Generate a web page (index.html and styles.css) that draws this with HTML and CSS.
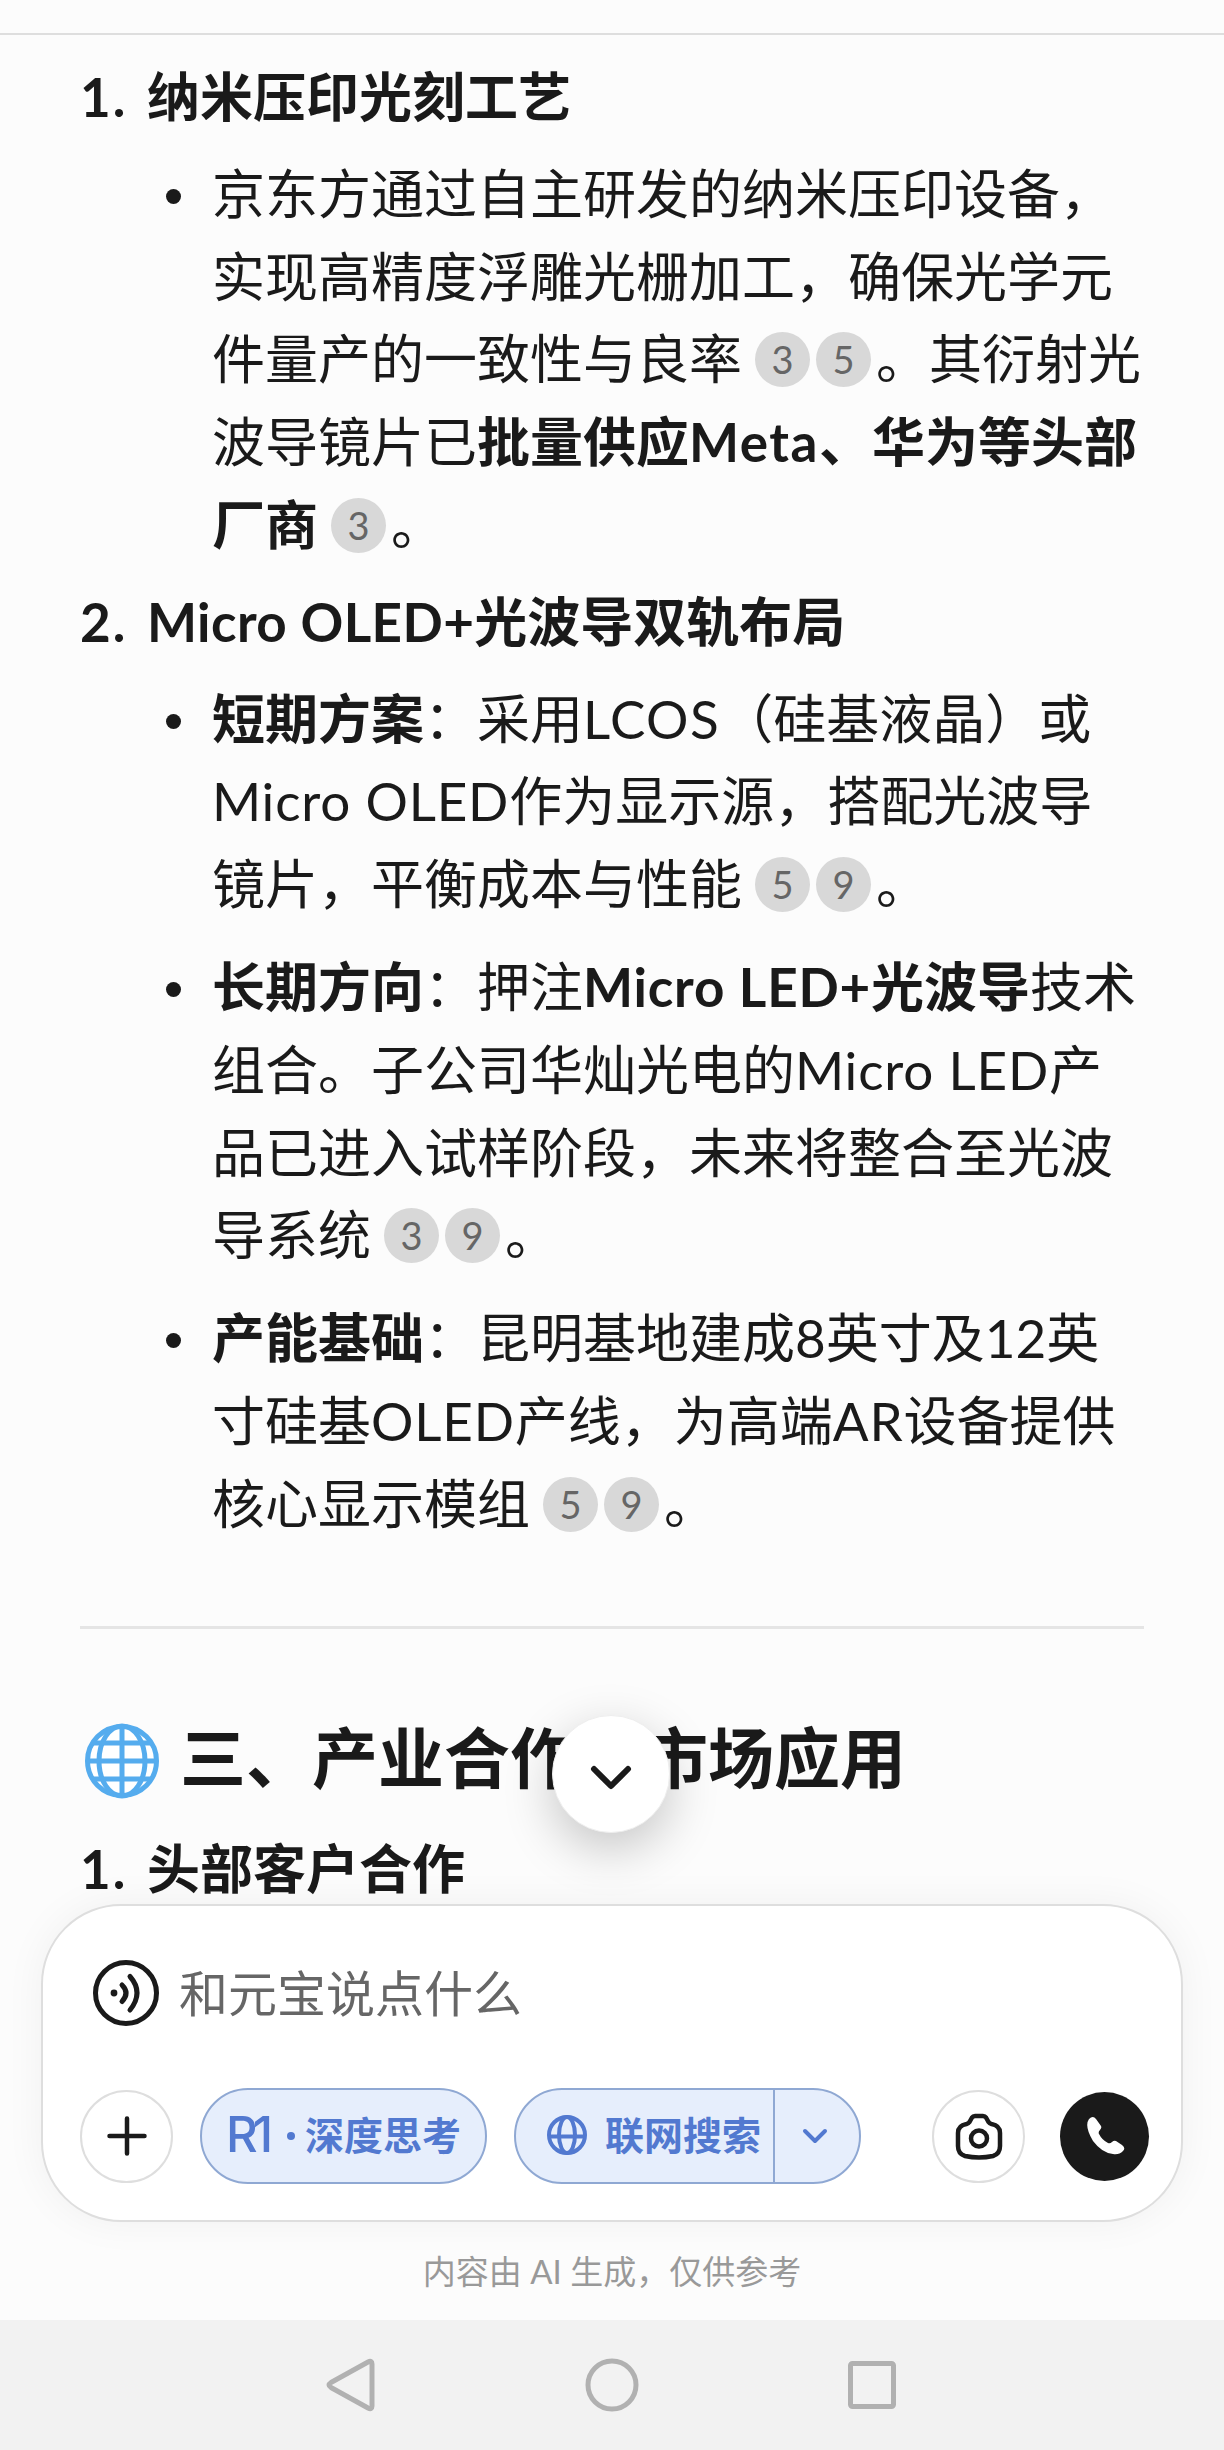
FILE: index.html
```
<!DOCTYPE html>
<html lang="zh-CN">
<head>
    <meta charset="UTF-8">
    <meta name="viewport" content="width=device-width, initial-scale=1.0">
    <title>元宝</title>
    <link rel="stylesheet" href="styles.css">
</head>
<body>
    <div class="topbar"></div>

    <main class="chat">
        <div class="item-title"><span class="num">1.</span>纳米压印光刻工艺</div>
        <ul>
            <li>京东方通过自主研发的纳米压印设备，<br>实现高精度浮雕光栅加工，确保光学元<br>件量产的一致性与良率<span class="refs"><span class="ref">3</span><span class="ref">5</span></span>。其衍射光<br>波导镜片已<b>批量供应<span class="en wide">Meta</span>、华为等头部<br>厂商</b><span class="refs"><span class="ref">3</span></span>。</li>
        </ul>
        <div class="item-title"><span class="num">2.</span><span class="en tight">Micro OLED+</span>光波导双轨布局</div>
        <ul>
            <li><b>短期方案</b>：采用<span class="en wide">LCOS</span>（硅基液晶）或<br><span class="en">Micro OLED</span>作为显示源，搭配光波导<br>镜片，平衡成本与性能<span class="refs"><span class="ref">5</span><span class="ref">9</span></span>。</li>
            <li><b>长期方向</b>：押注<b><span class="en">Micro LED+</span>光波导</b>技术<br>组合。子公司华灿光电的<span class="en">Micro LED</span>产<br>品已进入试样阶段，未来将整合至光波<br>导系统<span class="refs"><span class="ref">3</span><span class="ref">9</span></span>。</li>
            <li><b>产能基础</b>：昆明基地建成8英寸及12英<br>寸硅基<span class="en">OLED</span>产线，为高端<span class="en">AR</span>设备提供<br>核心显示模组<span class="refs"><span class="ref">5</span><span class="ref">9</span></span>。</li>
        </ul>
        <hr>
        <h2>
            <svg class="globe-emoji" viewBox="0 0 76 76" fill="none" stroke="#55acee" stroke-width="5">
                <circle cx="38" cy="38" r="34.500" fill="#fff"/>
                <ellipse cx="38" cy="38" rx="23" ry="35"/>
                <path d="M38 3v70M3 38h70M8 20h60M8 56h60"/>
            </svg>
            三、产业合作与市场应用
        </h2>
        <div class="item-title"><span class="num">1.</span>头部客户合作</div>
        <button class="scroll-down">
            <svg width="44" height="30" viewBox="0 0 44 30" fill="none" stroke="#1a1a1a" stroke-width="6" stroke-linecap="round" stroke-linejoin="round"><path d="M5 6l17 17L39 6"/></svg>
        </button>
    </main>

    <section class="composer">
        <div class="input-row">
            <svg width="66" height="66" viewBox="0 0 66 66" fill="none" stroke="#1a1a1a" stroke-width="5" stroke-linecap="round">
                <circle cx="33" cy="33" r="30.500"/>
                <circle cx="21" cy="33" r="3.400" fill="#1a1a1a" stroke="none"/>
                <path d="M29 25q8 8 0 16.500M37 16.500q14 16 0 33.500"/>
            </svg>
            <span class="placeholder">和元宝说点什么</span>
        </div>
        <div class="tools">
            <button class="round">
                <svg width="40" height="40" viewBox="0 0 40 40" stroke="#1a1a1a" stroke-width="4.500" stroke-linecap="round"><path d="M20 2.500v35M2.500 20h35"/></svg>
            </button>
            <button class="pill think"><span class="r1">R1</span><span class="dot"></span>深度思考</button>
            <div class="pill search">
                <div class="search-main">
                    <svg width="40" height="40" viewBox="0 0 40 40" fill="none" stroke="#5279d0" stroke-width="4">
                        <circle cx="20" cy="20" r="18"/>
                        <ellipse cx="20" cy="20" rx="8" ry="18"/>
                        <path d="M2 21.500h36"/>
                    </svg>
                    联网搜索
                </div>
                <div class="search-more">
                    <svg width="26" height="18" viewBox="0 0 26 18" fill="none" stroke="#5279d0" stroke-width="4" stroke-linecap="round" stroke-linejoin="round"><path d="M3 4l10 10L23 4"/></svg>
                </div>
            </div>
            <button class="round camera">
                <svg width="50" height="50" viewBox="0 0 50 50" fill="none" stroke="#1a1a1a" stroke-width="4.500" stroke-linejoin="round">
                    <path d="M18 6.500Q19 5 21 5h8q2 0 3 1.500l2.500 4.500q1 1.500 3 2 8.500 1.500 8.500 9V35q0 8-7 10-7 1.500-14 1.500T11 45Q4 43 4 35V22q0-7.500 8.500-9 2-.5 3-2z"/>
                    <circle cx="25" cy="27.500" r="8"/>
                </svg>
            </button>
            <button class="call">
                <svg width="40" height="40" viewBox="0 0 40 40" fill="#fff"><path d="M4 3Q8-1 11 3l5 7q1 2-1 4t-1 4q3 6 9 9 2 1 4-1t4-1l6 4q4 3 1 6-4 4-10 3Q17 37 8 25-1 10 4 3z"/></svg>
            </button>
        </div>
    </section>
    <p class="notice">内容由 AI 生成，仅供参考</p>

    <nav class="navbar">
        <svg width="54" height="54" viewBox="0 0 54 54"><path d="M6 24.500L43 4q4-2 4 2v42q0 4-4 2L6 29.500q-4-2.500 0-5z"/></svg>
        <svg width="54" height="54" viewBox="0 0 54 54"><circle cx="27" cy="27" r="24"/></svg>
        <svg width="54" height="54" viewBox="0 0 54 54"><rect x="5.500" y="5.500" width="43" height="43" rx="2"/></svg>
    </nav>
</body>
</html>
```

FILE: styles.css
```
* {
    box-sizing: border-box;
}
body {
    margin: 0;
    height: 2450px;
    display: flex;
    flex-direction: column;
    background-color: #fcfcfc;
    color: #1a1a1a;
    font-family: Lato, "Noto Sans CJK SC", sans-serif;
    overflow: hidden;
}
button {
    padding: 0;
    font: inherit;
}
svg {
    flex: none;
    display: block;
}
.topbar {
    height: 35px;
    border-bottom: 2px solid #dedede;
}

/* conversa */
.chat {
    position: relative;
    height: 1870px;
    padding: 21px 80px 0;
    font-size: 53px;
    line-height: 82.800px;
    white-space: nowrap;
}
.item-title {
    display: flex;
    font-weight: 700;
}
.num {
    width: 67px;
    letter-spacing: 2px;
}
.en {
    letter-spacing: 0.8px;
}
.en.wide {
    letter-spacing: 1.500px;
}
.en.tight {
    letter-spacing: 0.4px;
}
ul {
    list-style: none;
    margin: 14px 0;
    padding: 0 0 0 132px;
    display: flex;
    flex-direction: column;
    gap: 20px;
}
li::before {
    content: "";
    float: left;
    width: 15px;
    height: 15px;
    margin: 36px 0 0 -46px;
    border-radius: 50%;
    background-color: #1a1a1a;
}
.refs {
    display: inline-flex;
    gap: 6px;
    margin: 0 5px 12px 13px;
    vertical-align: middle;
    line-height: 54px;
}
.ref {
    width: 55px;
    height: 55px;
    border-radius: 50%;
    background-color: #d8d8d8;
    color: #666;
    font-size: 38px;
    text-align: center;
}
hr {
    height: 3px;
    margin: 80px 0 0;
    border: none;
    background-color: #e5e5e5;
}
h2 {
    display: flex;
    align-items: center;
    gap: 20px;
    margin: 79px 0 20px;
    font-size: 66px;
    line-height: 100px;
}
.globe-emoji {
    width: 76px;
    height: 76px;
    margin: 7px 0 0 4px;
}
.scroll-down {
    position: absolute;
    left: 552px;
    top: 1680px;
    width: 118px;
    height: 118px;
    display: flex;
    align-items: center;
    justify-content: center;
    padding-top: 8px;
    border: 1px solid #eee;
    border-radius: 50%;
    background-color: #fff;
    box-shadow: 0 16px 50px rgba(0, 0, 0, 0.22);
}

/* caixa de mensagem */
.composer {
    position: relative;
    height: 318px;
    margin: -1px 41px 0;
    padding: 54px 32px 0 37px;
    border: 2px solid #dedede;
    border-radius: 80px;
    background-color: #fff;
    box-shadow: 0 0 40px rgba(0, 0, 0, 0.05);
}
.input-row {
    display: flex;
    align-items: center;
    gap: 20px;
    height: 66px;
    padding-left: 13px;
}
.placeholder {
    color: #666;
    font-size: 49px;
    line-height: 66px;
}
.tools {
    display: flex;
    align-items: center;
    height: 96px;
    margin-top: 62px;
}
.round, .call {
    display: flex;
    align-items: center;
    justify-content: center;
    width: 93px;
    height: 93px;
    border: 2px solid #dedede;
    border-radius: 50%;
    background-color: #fff;
}
.pill {
    display: flex;
    align-items: center;
    height: 96px;
    border: 2px solid #8fa8d3;
    border-radius: 48px;
    background-color: #e6eefc;
    color: #5279d0;
    font-size: 39px;
    font-weight: 700;
    line-height: 56px;
    white-space: nowrap;
}
.think {
    width: 287px;
    margin: 0 27px;
    padding: 0 0 3px 24px;
}
.r1 {
    width: 61px;
    font-family: Inter, sans-serif;
    font-size: 49px;
    font-weight: 500;
    letter-spacing: -5px;
    text-align: left;
}
.dot {
    width: 8px;
    height: 8px;
    margin: 2px 10px 0 0;
    border-radius: 50%;
    background-color: #5279d0;
}
.search {
    width: 347px;
}
.search-main {
    display: flex;
    align-items: center;
    gap: 18px;
    width: 257px;
    padding: 0 0 2px 31px;
}
.search-more {
    display: flex;
    align-items: center;
    justify-content: center;
    height: 92px;
    width: 84px;
    padding-right: 2px;
    border-left: 2px solid #8fa8d3;
}
.camera {
    margin-left: auto;
}
.call {
    width: 89px;
    height: 89px;
    margin-left: 35px;
    border: none;
    background-color: #1a1a1a;
}
.notice {
    margin: 24px 0 0;
    height: 74px;
    color: #999;
    font-size: 33px;
    line-height: 50px;
    text-align: center;
}
.navbar {
    flex: 1;
    display: flex;
    align-items: center;
    justify-content: center;
    gap: 206px;
    background-color: #f2f2f2;
}
.navbar svg {
    fill: none;
    stroke: #b1b1b1;
    stroke-width: 5;
}
```
